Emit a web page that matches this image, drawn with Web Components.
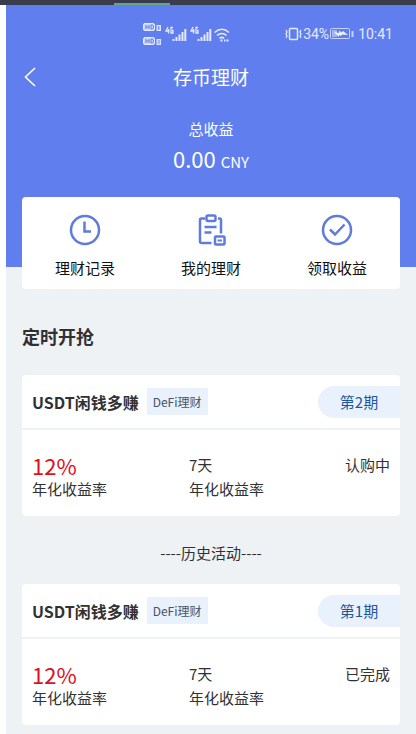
<!DOCTYPE html>
<html lang="zh-CN">
<head>
<meta charset="utf-8">
<meta name="viewport" content="width=device-width, initial-scale=1">
<title>存币理财</title>
<style>
  html, body { margin: 0; background: #fff; }
  body {
    font-family: "Noto Sans CJK SC", "Noto Sans", sans-serif;
    font-size: 15px; line-height: 24px; color: #303133;
    --blue: #607eee; --icon: #5f7bdd; --page: #eef2f5; --tint: #e9f1fc; --link: #22569b;
  }
</style>
</head>
<body>
<wealth-app></wealth-app>

<template id="t-app">
  <style>
    :host { display: flex; flex-direction: column; min-height: 100vh; }
    .edge { height: 5px; background: #3a3c4b; display: flex; align-items: flex-end; padding-left: 114px; }
    .edge i { width: 56px; height: 2px; background: #62a58f; }
    .page { flex: 1; margin-left: 6px; background: var(--page); }
    .hero { background: var(--blue); color: #fff; padding-bottom: 70px; }
    main { padding: 0 16px 8px; }
    action-panel { margin-top: -70px; }
    h2 { margin: 33px 0 25px; font-size: 18px; line-height: 28px; font-weight: 700; }
    .history { margin: 25px 0 19px; text-align: center; }
  </style>
  <div class="edge"><i></i></div>
  <div class="page">
    <div class="hero">
      <phone-status></phone-status>
      <page-header>存币理财</page-header>
      <total-income amount="0.00" unit="CNY">总收益</total-income>
    </div>
    <main>
      <action-panel>
        <action-item icon="clock">理财记录</action-item>
        <action-item icon="board">我的理财</action-item>
        <action-item icon="check">领取收益</action-item>
      </action-panel>
      <h2>定时开抢</h2>
      <product-card term="第2期" rate="12%" days="7天" state="认购中">USDT闲钱多赚</product-card>
      <p class="history">----历史活动----</p>
      <product-card term="第1期" rate="12%" days="7天" state="已完成">USDT闲钱多赚</product-card>
    </main>
  </div>
</template>

<template id="t-status">
  <style>
    :host { display: flex; justify-content: space-between; align-items: center; height: 26px;
      padding: 16px 23px 0 136px; font: 14px/20px Roboto, sans-serif; color: #e4ebff; }
    div { display: flex; align-items: center; gap: 1px; }
    svg { display: block; }
    .time { margin-left: 3px; }
  </style>
  <div>
    <svg width="90" height="26" viewBox="0 0 90 26" fill="none" stroke="#e4ebff" aria-hidden="true">
      <g><rect x="1.5" y="2.5" width="11" height="7" rx="1.5" fill="#cbd8fc"/>
        <path d="M4 4v4M7 4v4M4 6h3M9 4h1.2q1.3 0 1.3 2t-1.3 2H9z" stroke="#607eee"/>
        <rect x="15" y="4.5" width="3.5" height="5" fill="#c3d1fc" stroke="#dce5ff"/><path d="M16.7 5.5v3" stroke="#607eee"/></g>
      <g><rect x="1.5" y="16.5" width="11" height="7" rx="1.5" fill="#cbd8fc"/>
        <path d="M4 18v4M7 18v4M4 20h3M9 18h1.2q1.3 0 1.3 2t-1.3 2H9z" stroke="#607eee"/>
        <rect x="15" y="18.5" width="3.5" height="5" fill="#c3d1fc" stroke="#dce5ff"/><path d="M16 20h2M16 22h2" stroke="#607eee" stroke-width=".7"/></g>
      <path d="M26 6l-2 4h3.5M26.5 8v4.5M31 6.5h-2V12h2V9.5h-1" stroke-width="1.3"/>
      <path d="M31.500 20v-2M34.500 20v-4M37.500 20v-6.500M40.500 20v-9M43.300 20V8" stroke-width="2"/>
      <path d="M51 6l-2 4h3.5M51.5 8v4.5M56 6.5h-2V12h2V9.5h-1" stroke-width="1.3"/>
      <path d="M56.500 20v-2M59.500 20v-4M62.500 20v-6.500M65.500 20v-9M68.300 20V8" stroke-width="2"/>
      <path d="M72.5 11.5q7.500-6.500 14.500 0M75 14.500q5-4 9.500 0M77.500 17.300q2.500-1.800 4.500 0" stroke-width="1.600"/>
      <path d="M78.500 19.500h2M82 19.500h1.500M84.500 19.500h2" stroke-width="1.800"/>
    </svg>
  </div>
  <div>
    <svg width="17" height="14" viewBox="0 0 17 14" fill="none" stroke="#e4ebff" aria-hidden="true">
      <rect x="4.500" y="1.500" width="8" height="11" rx="1" stroke-width="1.500"/>
      <path d="M1 3l1 2-1 2 1 2-1 2M16 3l-1 2 1 2-1 2 1 2" stroke-width="1.300"/>
    </svg>
    <span>34%</span>
    <svg width="24" height="12" viewBox="0 0 24 12" fill="none" stroke="#c5d3fc" aria-hidden="true">
      <rect x=".5" y=".5" width="19" height="10" rx="1"/>
      <path d="M2 2h5v7H2z" fill="#a2b5f7" stroke="none"/>
      <path d="M4 4l5 1V2.500l2.500 2L13 3l5 4-6-.5-1 1.500-2-1v2z" fill="#edf2ff" stroke="none"/>
      <path d="M22.500 3v6" stroke-width="2"/>
    </svg>
    <span class="time">10:41</span>
  </div>
</template>

<template id="t-header">
  <style>
    :host { display: grid; grid-template-columns: 48px 1fr 48px; align-items: center; height: 60px; }
    button { border: 0; padding: 0; width: 48px; height: 48px; background: none; color: inherit; display: grid; place-items: center; }
    h1 { margin: 0; font-size: 19px; line-height: 28px; font-weight: 400; text-align: center; }
  </style>
  <button type="button" aria-label="返回"><svg width="12" height="20" viewBox="0 0 12 20" fill="none" stroke="currentColor" stroke-width="1.600"><path d="M11 1L1.500 10 11 19"/></svg></button>
  <h1><slot></slot></h1>
</template>

<template id="t-income">
  <style>
    :host { display: block; text-align: center; padding: 10px 0 19px; }
    .sum { font-size: 22px; line-height: 32px; margin-top: 1px; }
    small { font-size: 15px; }
  </style>
  <div><slot></slot></div>
  <div class="sum"><span class="n"></span> <small></small></div>
</template>

<template id="t-panel">
  <style>
    :host { display: grid; grid-template-columns: repeat(3, 1fr); background: #fff; border-radius: 4px; }
  </style>
  <slot></slot>
</template>

<template id="t-action">
  <style>
    :host { display: block; }
    button { width: 100%; border: 0; background: none; padding: 17px 0 9px; font: inherit; color: #111;
      display: flex; flex-direction: column; align-items: center; gap: 10px; }
    svg { display: block; fill: none; stroke: var(--icon); stroke-width: 2.5; }
  </style>
  <button type="button"><svg width="32" height="32" viewBox="0 0 32 32" aria-hidden="true"></svg><span><slot></slot></span></button>
</template>

<template id="t-card">
  <style>
    :host { display: block; background: #fff; border-radius: 4px; overflow: hidden; }
    header { display: flex; align-items: center; height: 53px; padding-left: 10px; border-bottom: 2px solid var(--page); }
    h3 { margin: 0 8px 0 0; font-size: 16px; line-height: 24px; font-weight: 700; }
    .tag { background: var(--tint); color: #45536b; font-size: 12px; line-height: 27px; padding: 0 6px; }
    .term { margin-left: auto; box-sizing: border-box; width: 82px; line-height: 32px; text-align: center;
      background: var(--tint); color: var(--link); border-radius: 16px 0 0 16px; }
    dl { margin: 0; padding: 23px 10px 15px; display: grid; grid-template-columns: 157px 1fr auto; }
    dl div { display: flex; flex-direction: column; }
    dd, dt { margin: 0; line-height: 24px; }
    .rate { font-size: 22px; color: #e01020; }
  </style>
  <header><h3><slot></slot></h3><span class="tag">DeFi理财</span><span class="term"></span></header>
  <dl>
    <div><dd class="rate"></dd><dt>年化收益率</dt></div>
    <div><dd class="days"></dd><dt>年化收益率</dt></div>
    <div><dd class="state"></dd></div>
  </dl>
</template>

<script>
  const icons = {
    clock: '<circle cx="16" cy="16" r="14"/><path d="M15.5 7.5V17.5H22"/>',
    board: '<path d="M10 4.5H6.5Q5 4.5 5 6V27.5Q5 29 6.5 29H16.5M23 4.5H24.5Q26 4.5 26 6V19.5"/><rect x="11.5" y="1.500" width="9" height="5.5" rx="1.5"/><path d="M9.5 13H21.5M9.5 18.5H16.5"/><rect x="20" y="22.5" width="9.5" height="8" rx="1"/><path d="M22.5 26.5H27" stroke-width="2"/>',
    check: '<circle cx="16" cy="16" r="14"/><path d="M9 15.5L14 20.5 23.5 10.5"/>'
  };

  class Base extends HTMLElement {
    constructor() {
      super();
      this.attachShadow({ mode: "open" })
        .append(document.getElementById(this.constructor.template).content.cloneNode(true));
    }
    put(selector, attribute) {
      this.shadowRoot.querySelector(selector).textContent = this.getAttribute(attribute);
    }
  }
  customElements.define("phone-status", class extends Base { static template = "t-status"; });
  customElements.define("page-header", class extends Base { static template = "t-header"; });
  customElements.define("total-income", class extends Base {
    static template = "t-income";
    connectedCallback() { this.put(".n", "amount"); this.put("small", "unit"); }
  });
  customElements.define("action-panel", class extends Base { static template = "t-panel"; });
  customElements.define("action-item", class extends Base {
    static template = "t-action";
    connectedCallback() { this.shadowRoot.querySelector("svg").innerHTML = icons[this.getAttribute("icon")]; }
  });
  customElements.define("product-card", class extends Base {
    static template = "t-card";
    connectedCallback() {
      for (const name of ["term", "rate", "days", "state"]) this.put("." + name, name);
    }
  });
  customElements.define("wealth-app", class extends Base { static template = "t-app"; });
</script>
</body>
</html>
